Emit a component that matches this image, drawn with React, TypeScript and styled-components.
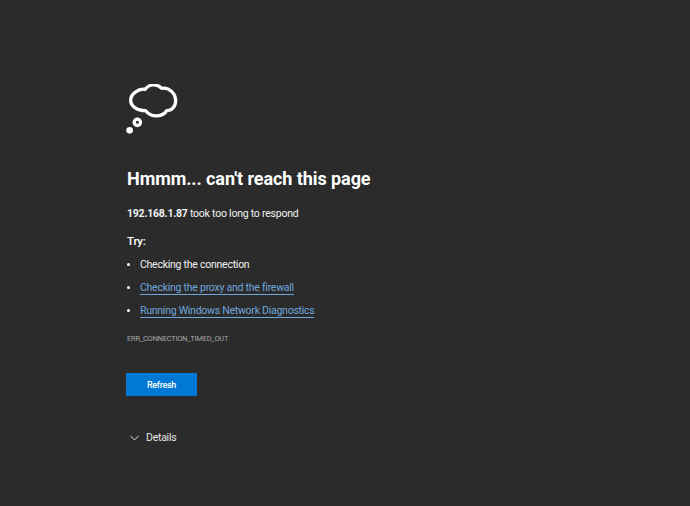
import styled, { createGlobalStyle } from "styled-components";

const GlobalStyle = createGlobalStyle`
  html, body {
    margin: 0;
    padding: 0;
    background: #2b2b2b;
  }
  body {
    font-family: Roboto, "Open Sans", "Liberation Sans", sans-serif;
    color: #ffffff;
  }
`;

const Page = styled.main`
  width: 690px;
  height: 506px;
  box-sizing: border-box;
  padding: 84px 0 0 127px;
  overflow: hidden;
  background: #2b2b2b;
`;

const CloudIcon = styled.svg`
  display: block;
  width: 52px;
  height: 50px;
  margin-left: -1px;
`;

const Heading = styled.h1`
  margin: 33px 0 0;
  font-size: 18px;
  line-height: 23px;
  font-weight: 700;
  letter-spacing: -0.07px;
`;

const Message = styled.p`
  margin: 16px 0 0;
  font-size: 10.5px;
  line-height: 16px;
  letter-spacing: -0.23px;
  color: #f2f2f2;

  strong {
    font-weight: 700;
  }
`;

const TryLabel = styled.h2`
  margin: 11px 0 0;
  font-size: 11.5px;
  line-height: 16px;
  font-weight: 500;
  letter-spacing: -0.2px;
`;

const Suggestions = styled.ul`
  list-style: none;
  margin: 7px 0 0;
  padding: 0;
  display: flex;
  flex-direction: column;
  gap: 7px;
`;

const Suggestion = styled.li`
  display: flex;
  align-items: center;
  height: 16px;
  font-size: 10.5px;
  letter-spacing: -0.25px;
  color: #f2f2f2;

  &::before {
    content: "";
    width: 3px;
    height: 3px;
    margin-right: 10px;
    border-radius: 50%;
    background: #ffffff;
  }
`;

const SuggestionLink = styled.a`
  color: #6ea6dc;
  text-decoration: none;
  border-bottom: 1px solid #6ea6dc;
  line-height: 12px;
  margin-top: 2px;
`;

const ErrorCode = styled.div`
  margin-top: 15px;
  font-size: 7.5px;
  line-height: 12px;
  letter-spacing: -0.25px;
  color: #a6a6a6;
`;

const RefreshButton = styled.button`
  display: block;
  width: 71px;
  height: 23px;
  margin: 28px 0 0 -1px;
  padding: 0;
  border: 0;
  background: #0078d4;
  color: #ffffff;
  font-family: inherit;
  font-size: 9px;
  font-weight: 500;
  letter-spacing: -0.3px;
`;

const DetailsToggle = styled.div`
  display: flex;
  align-items: center;
  gap: 7px;
  margin: 34px 0 0 3px;
  font-size: 10.5px;
  line-height: 16px;
  letter-spacing: -0.25px;
  color: #e6e6e6;
`;

const Chevron = styled.svg`
  width: 9px;
  height: 6px;
`;

export default function App() {
  return (
    <>
      <GlobalStyle />
      <Page>
        <CloudIcon viewBox="48 42 156 150" fill="none">
          <path
            d="M105 58C118 42 140 40 155 55C178 50 197 72 197 92C197 110 185 122 170 122C160 140 125 145 107 122C80 122 62 108 62 90C62 72 85 55 105 58Z"
            stroke="#fff"
            strokeWidth="10"
            strokeLinejoin="round"
          />
          <circle cx="82" cy="157" r="9.5" stroke="#fff" strokeWidth="10" />
          <circle cx="59" cy="181" r="10" fill="#fff" />
        </CloudIcon>
        <Heading>Hmmm... can't reach this page</Heading>
        <Message>
          <strong>192.168.1.87</strong> took too long to respond
        </Message>
        <TryLabel>Try:</TryLabel>
        <Suggestions>
          <Suggestion>Checking the connection</Suggestion>
          <Suggestion>
            <SuggestionLink>Checking the proxy and the firewall</SuggestionLink>
          </Suggestion>
          <Suggestion>
            <SuggestionLink>Running Windows Network Diagnostics</SuggestionLink>
          </Suggestion>
        </Suggestions>
        <ErrorCode>ERR_CONNECTION_TIMED_OUT</ErrorCode>
        <RefreshButton>Refresh</RefreshButton>
        <DetailsToggle>
          <Chevron viewBox="0 0 9 6" fill="none">
            <path d="M.5.8 4.5 5 8.5.8" stroke="#d9d9d9" strokeWidth="1" />
          </Chevron>
          Details
        </DetailsToggle>
      </Page>
    </>
  );
}
